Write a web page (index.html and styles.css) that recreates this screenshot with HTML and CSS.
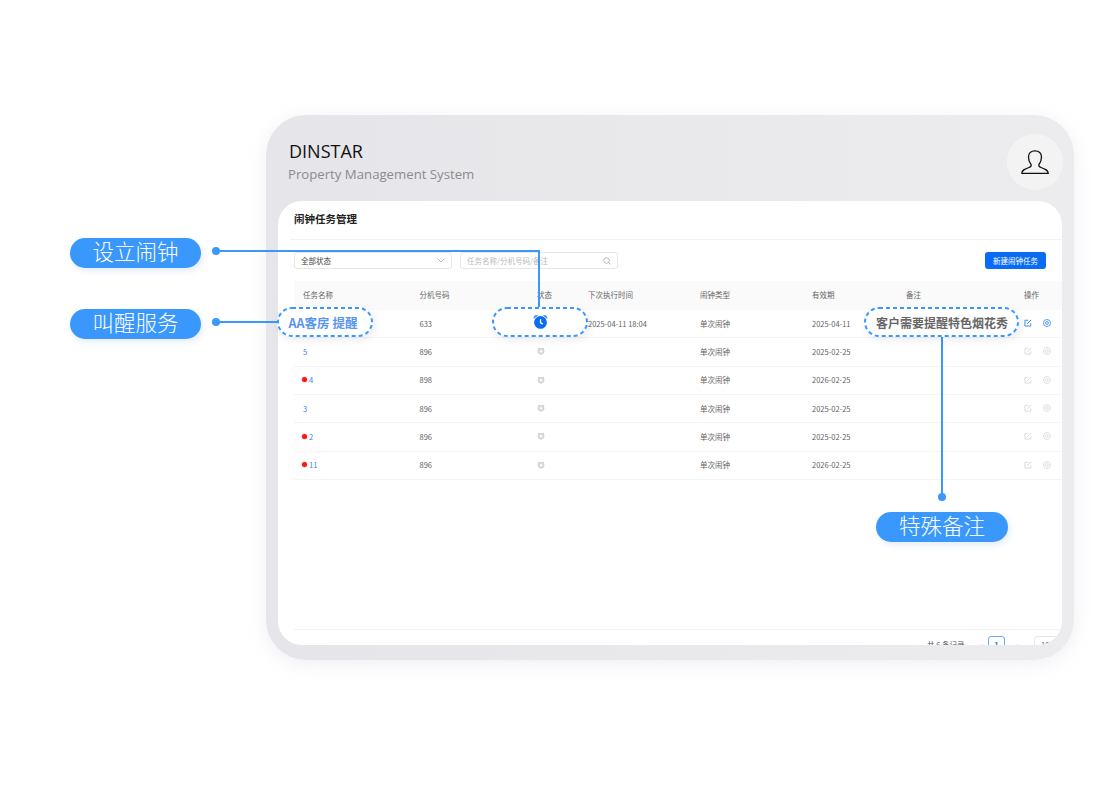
FILE: index.html
```html
<!DOCTYPE html>
<html lang="zh-CN">
<head>
    <meta charset="UTF-8">
    <title>闹钟任务管理</title>
    <link rel="stylesheet" href="styles.css">
</head>
<body>
    <svg class="icon-defs" width="0" height="0">
        <symbol id="i-alarm" viewBox="0 0 16 16">
            <path fill="currentColor" opacity=".7" d="M1 5.200C.2 3.600 1 1.400 3.200 1c.9-.2 1.700.1 2.300.7zM15 5.200c.8-1.600 0-3.800-2.200-4.200-.9-.2-1.700.1-2.300.7z"/>
            <circle cx="8" cy="9" r="6.800" fill="currentColor"/>
            <path fill="none" stroke="#fff" stroke-width="1.400" d="M8 5.500v3.700l2.400 1.600"/>
        </symbol>
        <symbol id="i-idle" viewBox="0 0 16 16">
            <path fill="currentColor" d="M2 1.500l4 1h4l4-1 .5 9-6.500 5-6.500-5z"/>
            <circle cx="8" cy="8.500" r="6.500" fill="currentColor"/>
            <circle cx="8" cy="8.500" r="2.800" fill="#f7f7f7"/>
        </symbol>
        <symbol id="i-edit" viewBox="0 0 16 16">
            <path fill="none" stroke="currentColor" stroke-width="1.800" d="M13.500 8.500v5.600h-11.600v-11.600h6.600"/>
            <path fill="none" stroke="currentColor" stroke-width="2" d="M6.500 9.500l7.700-7.700"/>
        </symbol>
        <symbol id="i-target" viewBox="0 0 16 16">
            <circle cx="8" cy="8" r="7" fill="none" stroke="currentColor" stroke-width="1.600"/>
            <circle cx="8" cy="8" r="2.800" fill="none" stroke="currentColor" stroke-width="1.600"/>
        </symbol>
    </svg>

    <div class="frame">
        <header class="frame-head">
            <div>
                <h1>DINSTAR</h1>
                <p>Property Management System</p>
            </div>
            <div class="avatar">
                <svg width="28" height="24" viewBox="0 0 28 24">
                    <path fill="none" stroke="#111" stroke-width="1.300" d="M.8 23.400H27.200C27.200 20 24 19 20 17.500C18 16.700 17.500 15.500 18 14.500C20 12 20.500 9.500 20.500 7C20.500 3 18 .8 14 .8C10 .8 7.500 3 7.500 7C7.500 9.500 8 12 10 14.500C10.500 15.500 10 16.700 8 17.500C4 19 .8 20 .8 23.400Z"/>
                </svg>
            </div>
        </header>

        <main class="panel">
            <h2 class="panel-title">闹钟任务管理</h2>

            <div class="toolbar">
                <div class="field field-select">
                    <span>全部状态</span>
                    <svg width="8" height="5" viewBox="0 0 8 5"><path fill="none" stroke="#aaa" stroke-width=".8" d="M.5.5L4 4 7.500.5"/></svg>
                </div>
                <div class="field field-search">
                    <span>任务名称/分机号码/备注</span>
                    <svg width="8" height="8" viewBox="0 0 8 8"><circle cx="3.500" cy="3.500" r="2.800" fill="none" stroke="#aaa" stroke-width=".8"/><path stroke="#aaa" stroke-width=".8" d="M5.500 5.500L7.500 7.500"/></svg>
                </div>
                <button class="btn-new">新建闹钟任务</button>
            </div>

            <div class="table">
                <div class="row row-head">
                    <div>任务名称</div><div>分机号码</div><div>状态</div><div>下次执行时间</div><div>闹钟类型</div><div>有效期</div><div>备注</div><div>操作</div>
                </div>
                <div class="row">
                    <div></div><div>633</div>
                    <div></div>
                    <div>2025-04-11 18:04</div><div>单次闹钟</div><div>2025-04-11</div><div></div>
                    <div class="actions on"><svg><use href="#i-edit"/></svg><svg><use href="#i-target"/></svg></div>
                </div>
                <div class="row">
                    <div class="name">5</div><div>896</div>
                    <div><svg class="idle"><use href="#i-idle"/></svg></div>
                    <div></div><div>单次闹钟</div><div>2025-02-25</div><div></div>
                    <div class="actions"><svg><use href="#i-edit"/></svg><svg><use href="#i-target"/></svg></div>
                </div>
                <div class="row">
                    <div class="name"><i class="dot"></i>4</div><div>898</div>
                    <div><svg class="idle"><use href="#i-idle"/></svg></div>
                    <div></div><div>单次闹钟</div><div>2026-02-25</div><div></div>
                    <div class="actions"><svg><use href="#i-edit"/></svg><svg><use href="#i-target"/></svg></div>
                </div>
                <div class="row">
                    <div class="name">3</div><div>896</div>
                    <div><svg class="idle"><use href="#i-idle"/></svg></div>
                    <div></div><div>单次闹钟</div><div>2025-02-25</div><div></div>
                    <div class="actions"><svg><use href="#i-edit"/></svg><svg><use href="#i-target"/></svg></div>
                </div>
                <div class="row">
                    <div class="name"><i class="dot"></i>2</div><div>896</div>
                    <div><svg class="idle"><use href="#i-idle"/></svg></div>
                    <div></div><div>单次闹钟</div><div>2025-02-25</div><div></div>
                    <div class="actions"><svg><use href="#i-edit"/></svg><svg><use href="#i-target"/></svg></div>
                </div>
                <div class="row">
                    <div class="name"><i class="dot"></i>11</div><div>896</div>
                    <div><svg class="idle"><use href="#i-idle"/></svg></div>
                    <div></div><div>单次闹钟</div><div>2026-02-25</div><div></div>
                    <div class="actions"><svg><use href="#i-edit"/></svg><svg><use href="#i-target"/></svg></div>
                </div>
            </div>

            <footer class="pager">
                <span class="total">共 6 条记录</span>
                <span class="arrow">‹</span>
                <span class="page-no">1</span>
                <span class="arrow">›</span>
                <span class="page-size">10</span>
            </footer>
        </main>
    </div>

    <!-- 标注层 -->
    <div class="pill pill-alarm">设立闹钟</div>
    <div class="pill pill-wake">叫醒服务</div>
    <div class="pill pill-note">特殊备注</div>

    <i class="pin pin-alarm"></i>
    <i class="pin pin-wake"></i>
    <i class="pin pin-note"></i>
    <i class="wire wire-alarm-h"></i>
    <i class="wire wire-alarm-v"></i>
    <i class="wire wire-wake"></i>
    <i class="wire wire-note"></i>

    <div class="oval oval-name">
        <svg class="oval-line" width="96" height="30"><rect x="1" y="1" width="94" height="28" rx="14"/></svg>
        AA客房 提醒
    </div>
    <div class="oval oval-status">
        <svg class="oval-line" width="96" height="30"><rect x="1" y="1" width="94" height="28" rx="14"/></svg>
        <svg width="15" height="15"><use href="#i-alarm"/></svg>
    </div>
    <div class="oval oval-note">
        <svg class="oval-line" width="155" height="30"><rect x="1" y="1" width="153" height="28" rx="14"/></svg>
        客户需要提醒特色烟花秀
    </div>
</body>
</html>
```

FILE: styles.css
```css
body {
    margin: 0;
    height: 800px;
    overflow: hidden;
    position: relative;
    background-color: #fff;
    font-family: 'Noto Sans CJK SC', 'Noto Sans', sans-serif;
}
.icon-defs {
    position: absolute;
}
.frame {
    box-sizing: border-box;
    width: 808px;
    height: 545px;
    margin: 115px 0 0 266px;
    padding: 0 12px 15px;
    border-radius: 40px;
    background: linear-gradient(90deg, #e6e6ea, #ececee);
    box-shadow: 0 4px 18px rgba(190, 195, 210, 0.25);
    display: flex;
    flex-direction: column;
}
.frame-head {
    height: 86px;
    flex-shrink: 0;
    display: flex;
    justify-content: space-between;
    padding: 19px 0 0 11px;
    box-sizing: border-box;
}
.frame-head h1 {
    margin: 0;
    font: 400 18px/34px 'Open Sans', sans-serif;
    color: #111;
}
.frame-head p {
    margin: 0 0 0 -1px;
    font: 400 13.200px/12px 'Open Sans', sans-serif;
    color: #8b8b8d;
}
.avatar {
    width: 56px;
    height: 56px;
    margin-right: -1px;
    border-radius: 50%;
    background-color: #f3f3f4;
    display: flex;
    justify-content: center;
    align-items: center;
}
.panel {
    flex: 1;
    min-height: 0;
    background-color: #fff;
    border-radius: 24px;
    overflow: hidden;
    display: flex;
    flex-direction: column;
}
.panel-title {
    height: 39px;
    margin: 0 0 0 12px;
    padding-left: 4px;
    box-sizing: border-box;
    border-bottom: 1px solid #f3f3f3;
    font-size: 10.500px;
    font-weight: 700;
    line-height: 36px;
    color: #222;
    flex-shrink: 0;
}
.toolbar {
    display: flex;
    align-items: center;
    gap: 8px;
    padding: 12px 16px;
    flex-shrink: 0;
}
.field {
    box-sizing: border-box;
    width: 158px;
    height: 17px;
    padding: 0 6px;
    border: 1px solid #e6e6e6;
    border-radius: 3px;
    display: flex;
    justify-content: space-between;
    align-items: center;
    font-size: 7.500px;
    color: #444;
}
.field-search {
    color: #bbb;
}
.btn-new {
    width: 61px;
    height: 17px;
    margin-left: auto;
    padding: 0;
    border: none;
    border-radius: 3px;
    background-color: #0a6cf5;
    color: #fff;
    font-family: inherit;
    font-size: 7.500px;
}
.table {
    flex: 1;
    margin-left: 16px;
}
.row {
    display: grid;
    grid-template-columns: 116.500px 117.500px 51px 112px 112px 94px 118px 1fr;
    align-items: center;
    box-sizing: border-box;
    height: 28.330px;
    padding-left: 9px;
    padding-bottom: 1px;
    border-bottom: 1px solid #f4f4f4;
    font-size: 7.500px;
    color: #5f5f5f;
    white-space: nowrap;
}
.row-head {
    height: 29px;
    padding-bottom: 2px;
    background-color: #fafafa;
    border-bottom: none;
    color: #666;
}
.name {
    color: #3d80f2;
    display: flex;
    align-items: center;
}
.dot {
    width: 5px;
    height: 5px;
    margin: 0 2px 0 -1px;
    border-radius: 50%;
    background-color: #f5190f;
    box-shadow: 0 0 2px rgba(245, 25, 15, 0.5);
}
.row svg {
    display: block;
}
.idle {
    width: 8px;
    height: 8px;
    color: #d6d6d6;
}
.actions {
    display: flex;
    gap: 11px;
    color: #d8d8d8;
}
.actions.on {
    color: #2a86ff;
}
.actions svg {
    width: 8px;
    height: 8px;
}
.pager {
    height: 16px;
    flex-shrink: 0;
    box-sizing: border-box;
    margin-left: 16px;
    padding-top: 6px;
    border-top: 1px solid #f2f2f2;
    display: flex;
    align-items: flex-start;
    font-size: 7.500px;
    color: #555;
}
.pager span {
    flex-shrink: 0;
}
.total {
    margin-left: 633px;
    padding-top: 3px;
    width: 49px;
}
.arrow {
    width: 12px;
    color: #bbb;
    font-size: 10px;
    line-height: 18px;
    text-align: center;
}
.page-no {
    box-sizing: border-box;
    width: 17px;
    height: 18px;
    margin: 0 7px 0 0;
    border: 1.500px solid #6aa9f8;
    border-radius: 3px;
    text-align: center;
    line-height: 15px;
    font-weight: 700;
    color: #2a6fe0;
}
.page-size {
    box-sizing: border-box;
    width: 34px;
    height: 18px;
    margin-left: 10px;
    padding-left: 6px;
    border: 1px solid #e6e6e6;
    border-radius: 3px;
    line-height: 16px;
}

/* 标注 */
.pill {
    position: absolute;
    width: 131px;
    height: 30px;
    border-radius: 15px;
    background-color: #3a98fd;
    box-shadow: 2px 3px 6px rgba(120, 160, 220, 0.2);
    color: #fff;
    font-size: 21.500px;
    font-weight: 300;
    line-height: 26px;
    text-align: center;
}
.pill-alarm { left: 70px; top: 238px; }
.pill-wake { left: 70px; top: 309px; }
.pill-note { left: 876px; top: 512px; width: 132px; }

.pin {
    position: absolute;
    width: 8px;
    height: 8px;
    border-radius: 50%;
    background-color: #3a98fd;
}
.pin-alarm { left: 212px; top: 247px; }
.pin-wake { left: 212px; top: 318px; }
.pin-note { left: 938px; top: 493px; }

.wire {
    position: absolute;
    background-color: #3a98fd;
}
.wire-alarm-h { left: 216px; top: 250px; width: 324px; height: 2px; }
.wire-alarm-v { left: 538px; top: 250px; width: 2px; height: 58px; }
.wire-wake { left: 216px; top: 321px; width: 62px; height: 2px; }
.wire-note { left: 941px; top: 336px; width: 2px; height: 160px; }

.oval {
    position: absolute;
    top: 307px;
    box-sizing: border-box;
    height: 30px;
    border-radius: 15px;
    background-color: #fff;
    box-shadow: 2px 3px 8px rgba(0, 0, 0, 0.08);
    display: flex;
    justify-content: center;
    align-items: center;
    font-weight: 700;
    white-space: nowrap;
}
.oval-line {
    position: absolute;
    left: 0;
    top: 0;
}
.oval-line rect {
    fill: none;
    stroke: #3a98fd;
    stroke-width: 2;
    stroke-dasharray: 4 3;
}
.oval-name {
    left: 277px;
    width: 96px;
    padding-right: 4px;
    font-size: 12.500px;
    color: #5a95ee;
}
.oval-status {
    left: 492px;
    width: 96px;
    padding-bottom: 2px;
    color: #0a6cf5;
}
.oval-note {
    left: 864px;
    width: 155px;
    padding-left: 1px;
    font-size: 12px;
    color: #666;
}
```
